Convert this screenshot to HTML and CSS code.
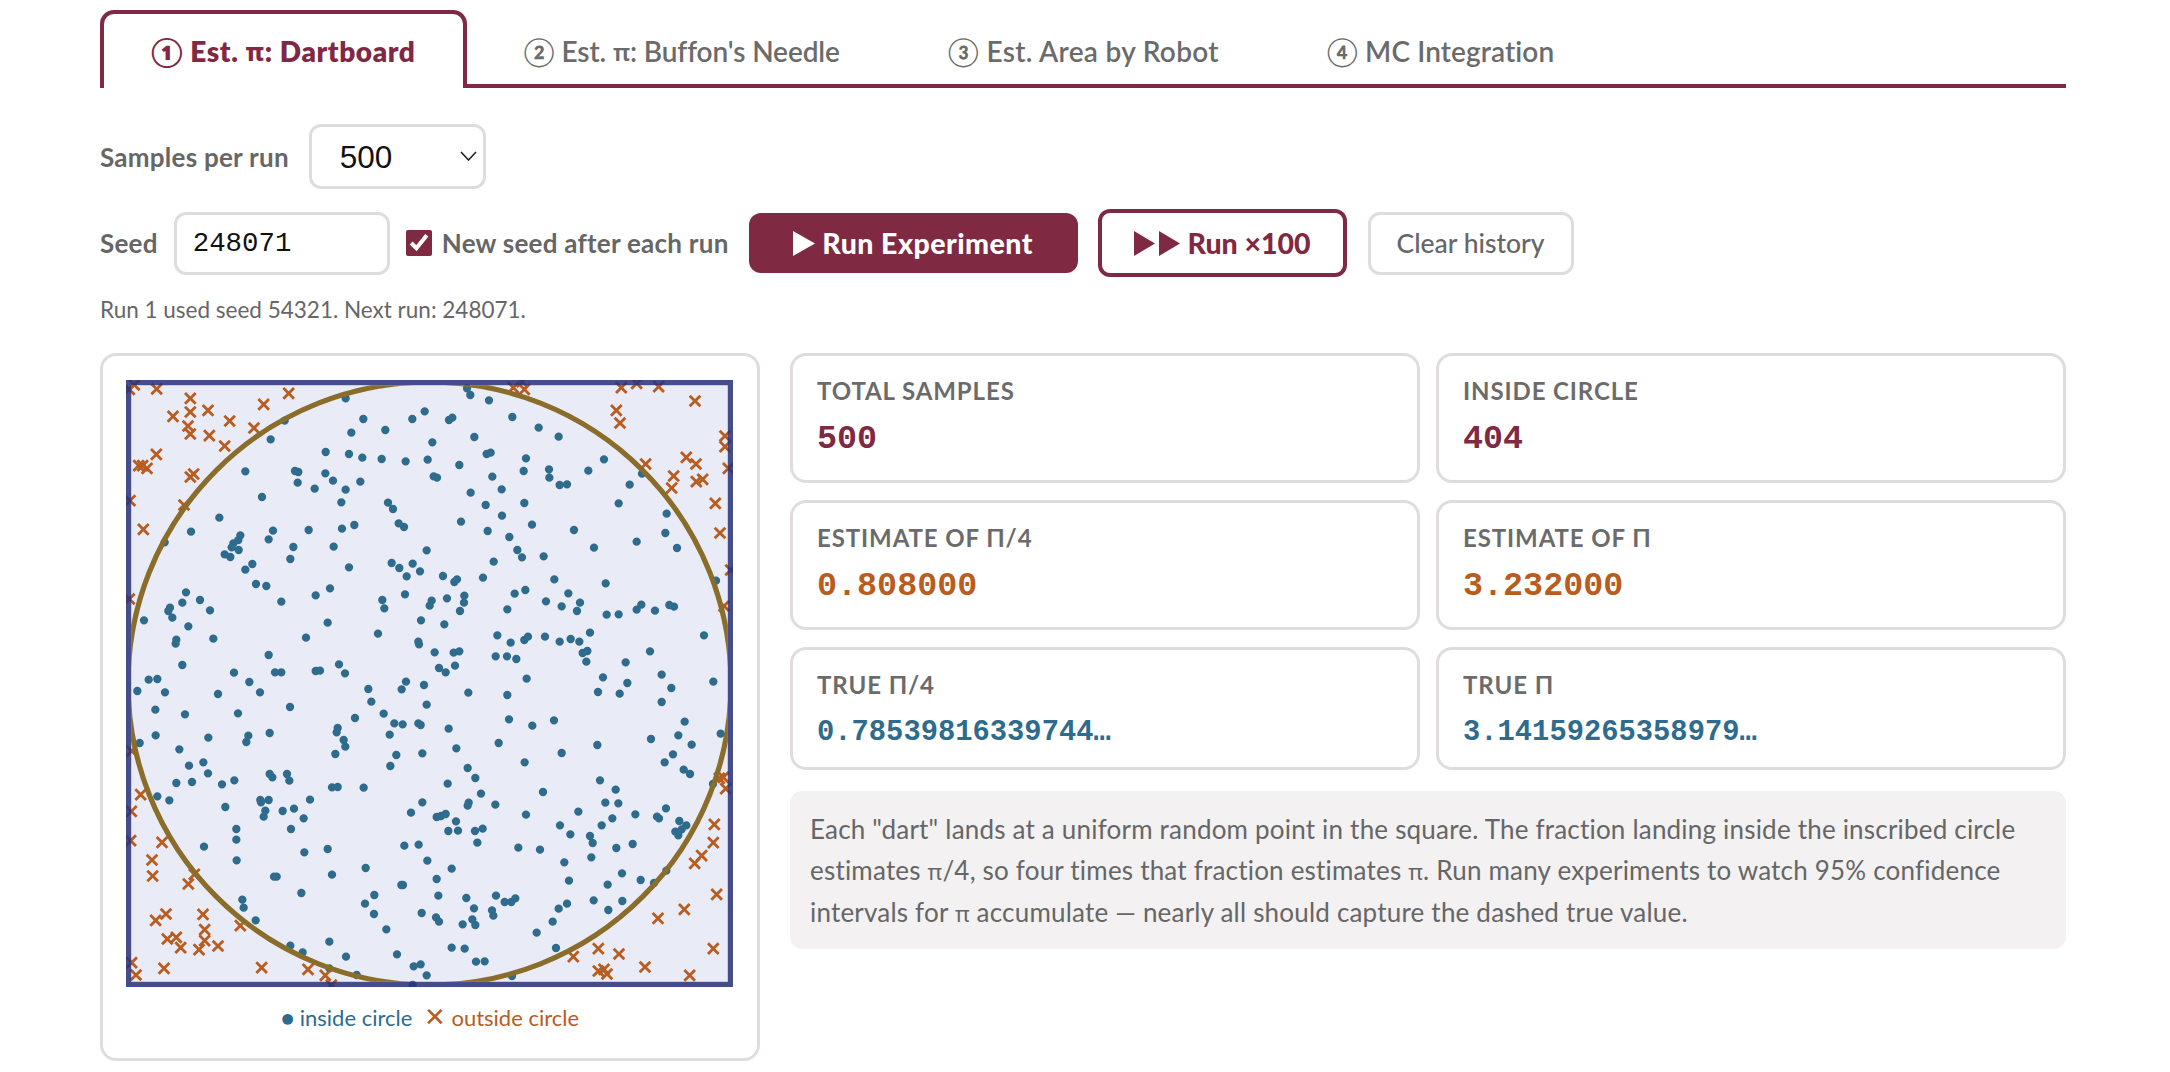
FILE: index.html
```html
<!DOCTYPE html>
<html lang="en">
<head>
<meta charset="utf-8">
<title>Monte Carlo</title>
<link rel="stylesheet" href="styles.css">
</head>
<body>
<div class="page">
  <nav class="tabs">
    <div class="tab active">① Est. <span class="pi">π</span>: Dartboard</div>
    <div class="tab">② Est. <span class="pi">π</span>: Buffon's Needle</div>
    <div class="tab">③ Est. Area by Robot</div>
    <div class="tab">④ MC Integration</div>
  </nav>
  <div class="row row-samples">
    <label class="lbl">Samples per run</label>
    <div class="select-wrap">
      <select class="select"><option>500</option></select>
      <svg class="chev" viewBox="0 0 17 10"><path d="M1 1l7.5 8L16 1" fill="none" stroke="#222" stroke-width="1.6"/></svg>
    </div>
  </div>
  <div class="row row-seed">
    <label class="lbl">Seed</label>
    <input class="seed" value="248071">
    <label class="check"><input type="checkbox" checked class="cb"><span>New seed after each run</span></label>
    <button class="btn primary"><svg class="tri" viewBox="0 0 22 25"><path d="M0 0l22 12.5L0 25z"/></svg>Run Experiment</button>
    <button class="btn outline"><svg class="tri2" viewBox="0 0 47 25"><path d="M0 0l21 12.5L0 25zM25 0l21 12.5L25 25z"/></svg>Run ×100</button>
    <button class="btn ghost">Clear history</button>
  </div>
  <p class="status">Run 1 used seed 54321. Next run: 248071.</p>
  <div class="main">
    <div class="plot-card">
      <svg class="plot" viewBox="126 380 607 607">
        <defs>
          <marker id="x" markerUnits="userSpaceOnUse" viewBox="-24 -24 48 48" markerWidth="48" markerHeight="48" refX="0" refY="0"><path d="M-16-16L16 16M16-16L-16 16" fill="none" stroke="#b85c20" stroke-width="8.5"/></marker>
          <clipPath id="inner"><rect x="131.2" y="385.2" width="596.6" height="596.6"/></clipPath>
        </defs>
        <rect x="126" y="380" width="607" height="607" class="bg"/>
        <g transform="translate(90 350) scale(.33333)">
          <path class="dots" d="M767 145h0M820 207h0M584 212h0M784 248h0M886 240h0M542 268h0M707 306h0M777 312h0M817 323h0M875 327h0M466 364h0M615 363h0M625 366h0M706 370h0M729 392h0M811 395h0M623 398h0M674 416h0M767 419h0M516 441h0M754 457h0M894 458h0M909 477h0M388 503h0M926 520h0M793 525h0M756 536h0M656 540h0M549 542h0M303 545h0M451 556h0M536 568h0M445 570h0M430 580h0M425 592h0M224 577h0M610 591h0M731 590h0M446 600h0M404 613h0M421 621h0M601 627h0M487 642h0M466 659h0M905 639h0M928 654h0M777 652h0M498 702h0M529 708h0M720 715h0M677 736h0M288 727h0M277 758h0M330 750h0M240 773h0M235 783h0M360 781h0M574 755h0M877 750h0M883 775h0M247 803h0M162 811h0M713 818h0M295 829h0M864 851h0M370 866h0M648 863h0M259 869h0M257 881h0M536 915h0M277 945h0M747 943h0M432 968h0M555 967h0M574 967h0M677 963h0M690 962h0M765 970h0M202 987h0M176 989h0M478 996h0M835 1017h0"/>
          <path class="xs" marker-start="url(#x)" marker-mid="url(#x)" marker-end="url(#x)" d="M133 105 118 118 200 117 301 145 596 130 521 163 354 181 301 186 249 199 419 213 294 228 492 234 301 252 358 257 404 288 199 313 146 347 158 347 171 355 311 372 301 381 120 452 282 465 160 538 118 747"/>
        </g>
        <g transform="translate(400 350) scale(.33333)">
          <path class="dots" d="M201 115h0M211 135h0M267 151h0M74 184h0M37 207h0M147 210h0M157 203h0M337 201h0M416 233h0M476 260h0M97 277h0M223 261h0M260 312h0M272 308h0M378 325h0M17 334h0M83 329h0M178 345h0M612 328h0M565 362h0M371 363h0M447 358h0M448 383h0M101 379h0M111 383h0M277 380h0M479 405h0M501 403h0M305 418h0M689 404h0M726 371h0M212 428h0M373 459h0M257 465h0M656 460h0M306 497h0M800 491h0M12 531h0M183 515h0M396 524h0M263 543h0M522 540h0M796 549h0M328 561h0M710 575h0M582 593h0M831 594h0M80 601h0M352 600h0M366 622h0M431 619h0M281 635h0M38 641h0M60 664h0M20 679h0M129 678h0M171 688h0M163 696h0M249 683h0M463 688h0M617 700h0M948 692h0M15 733h0M376 720h0M344 731h0M193 737h0M505 730h0M141 745h0M95 752h0M192 758h0M89 767h0M438 754h0M540 758h0M485 769h0M322 778h0M180 783h0M531 783h0M724 764h0M710 779h0M765 782h0M808 765h0M822 770h0M620 794h0M656 793h0M63 811h0M133 823h0M292 856h0M570 848h0M912 856h0M384 860h0M373 870h0M435 860h0M512 867h0M332 878h0M479 875h0M538 875h0M55 875h0M57 883h0M104 907h0M178 904h0M161 908h0M562 903h0M548 909h0M750 904h0M287 919h0M321 919h0M349 927h0M559 935h0M677 937h0M165 947h0M117 954h0M137 967h0M785 974h0M380 986h0M609 982h0M18 995h0M72 1005h0M682 999h0M940 995h0M814 1014h0M5 1018h0"/>
          <path class="xs" marker-start="url(#x)" marker-mid="url(#x)" marker-end="url(#x)" d="M340 113 373 118 366 95 664 113 710 100 776 110 885 153 649 181 660 219 975 258 975 290 859 322 888 342 737 342 985 355 821 378 889 395 908 388 815 414 946 460 960 549 992 660 972 768"/>
        </g>
        <g transform="translate(90 690) scale(.33333)">
          <path class="dots" d="M142 3h0M225 7h0M384 12h0M510 7h0M844 35h0M196 59h0M285 73h0M444 70h0M600 51h0M795 84h0M881 71h0M913 100h0M743 114h0M740 127h0M475 137h0M469 156h0M539 129h0M899 134h0M197 136h0M355 143h0M149 159h0M761 150h0M766 170h0M736 192h0M919 195h0M268 178h0M340 217h0M297 227h0M901 228h0M354 250h0M539 252h0M547 262h0M591 252h0M598 272h0M259 279h0M306 276h0M396 283h0M433 271h0M726 292h0M743 291h0M821 293h0M202 319h0M238 331h0M511 330h0M513 337h0M536 330h0M660 329h0M406 351h0M526 362h0M521 380h0M578 363h0M612 356h0M641 385h0M439 417h0M603 417h0M439 449h0M713 477h0M342 470h0M643 487h0M440 511h0M827 534h0M552 560h0M560 560h0M726 554h0M634 609h0M853 615h0M457 629h0M825 641h0M461 653h0M852 672h0M497 691h0M889 718h0M718 755h0M601 767h0M638 787h0M768 800h0M921 793h0M718 835h0M800 855h0"/>
          <path class="xs" marker-start="url(#x)" marker-mid="url(#x)" marker-end="url(#x)" d="M125 183 152 314 124 364 122 452 216 457 186 510 188 558 313 553 295 582 228 672 197 691 339 673 451 707 344 719 232 747 259 742 344 752 272 773 384 768 327 779 125 818 222 835 515 833 138 855 654 838 706 856 724 885"/>
        </g>
        <g transform="translate(400 690) scale(.33333)">
          <path class="dots" d="M205 8h0M322 15h0M594 6h0M659 11h0M785 36h0M80 44h0M327 88h0M462 91h0M854 95h0M8 103h0M55 100h0M62 105h0M397 107h0M146 116h0M962 131h0M835 136h0M753 147h0M296 159h0M592 165h0M875 164h0M169 175h0M67 190h0M485 189h0M819 193h0M374 217h0M794 217h0M203 234h0M851 239h0M870 252h0M226 264h0M143 281h0M600 271h0M939 282h0M647 299h0M429 306h0M243 311h0M616 338h0M655 340h0M67 337h0M206 338h0M203 347h0M286 344h0M33 368h0M137 372h0M123 378h0M110 381h0M378 374h0M535 365h0M706 373h0M798 355h0M771 380h0M777 385h0M168 394h0M637 385h0M838 393h0M859 406h0M145 423h0M174 422h0M225 423h0M248 416h0M480 406h0M605 406h0M511 433h0M570 438h0M578 459h0M232 458h0M845 418h0M826 425h0M835 436h0M13 467h0M56 464h0M355 473h0M420 479h0M649 474h0M698 462h0M574 502h0M82 512h0M493 517h0M155 536h0M666 550h0M799 542h0M110 567h0M507 572h0M722 570h0M762 579h0M4 585h0M9 585h0M623 584h0M115 617h0M199 624h0M288 617h0M581 631h0M667 633h0M346 625h0M334 636h0M314 636h0M501 641h0M476 656h0M625 660h0M222 655h0M276 661h0M65 669h0M280 677h0M108 682h0M117 695h0M217 688h0M188 703h0M226 705h0M458 695h0M410 728h0M155 773h0M194 776h0M468 774h0M228 815h0M254 814h0M62 823h0M41 829h0M80 856h0M336 858h0M38 885h0"/>
          <path class="xs" marker-start="url(#x)" marker-mid="url(#x)" marker-end="url(#x)" d="M970 262 958 265 977 296 943 403 940 458 905 497 884 520 950 613 853 658 774 685 595 776 657 792 520 800 940 776 735 831 595 843 612 838 621 852 869 856"/>
        </g>
        <g clip-path="url(#inner)"><circle cx="429.5" cy="683.5" r="301.5" class="ring"/></g>
        <rect x="128.6" y="382.6" width="601.8" height="601.8" class="frame"/>
      </svg>
      <div class="legend"><span class="in">● inside circle</span> <span class="out"><span class="cross">✕</span> outside circle</span></div>
    </div>
    <div class="side">
      <div class="stats">
        <div class="stat"><div class="stat-l">Total samples</div><div class="stat-v maroon">500</div></div>
        <div class="stat"><div class="stat-l">Inside circle</div><div class="stat-v maroon">404</div></div>
        <div class="stat"><div class="stat-l">Estimate of π/4</div><div class="stat-v orange">0.808000</div></div>
        <div class="stat"><div class="stat-l">Estimate of π</div><div class="stat-v orange">3.232000</div></div>
        <div class="stat"><div class="stat-l">True π/4</div><div class="stat-v small teal">0.78539816339744…</div></div>
        <div class="stat"><div class="stat-l">True π</div><div class="stat-v small teal">3.14159265358979…</div></div>
      </div>
      <div class="note">Each "dart" lands at a uniform random point in the square. The fraction landing inside the inscribed circle<br>estimates <span class="pi">π</span>/4, so four times that fraction estimates <span class="pi">π</span>. Run many experiments to watch 95% confidence<br>intervals for <span class="pi">π</span> accumulate — nearly all should capture the dashed true value.</div>
    </div>
  </div>
</div>
</body>
</html>
```

FILE: styles.css
```css
* { box-sizing: border-box; }
html, body { margin: 0; background: #fff; }
body { font-family: "Lato", "DejaVu Sans", sans-serif; color: #666; overflow: hidden; }
.page { width: 1966px; margin-left: 100px; padding-top: 10px; }
.pi { font-family: "Noto Sans", sans-serif; font-size: .86em; white-space: pre; }

.tabs { display: flex; gap: 6px; height: 78px; border-bottom: 4px solid #7f2942; }
.tab { padding: 0 47px; height: 78px; display: flex; align-items: center; gap: 0; font-size: 28px; font-weight: 600; letter-spacing: .1px; color: #6b6b6b; white-space: pre; border: 4px solid transparent; border-bottom: 0; }
.tab:nth-child(2) { letter-spacing: -.1px; }
.tab:nth-child(3) { letter-spacing: .3px; }
.tab.active { color: #7f2942; font-weight: 800; letter-spacing: .6px; border-color: #7f2942; border-radius: 14px 14px 0 0; background: #fff; }

.row { display: flex; align-items: center; }
.row-samples { margin-top: 36px; gap: 20px; }
.row-seed { margin-top: 20px; height: 68px; }
.lbl { font-size: 26px; font-weight: 700; letter-spacing: .25px; color: #666; white-space: nowrap; }

.select-wrap { position: relative; width: 177px; height: 65px; }
.select { appearance: none; width: 100%; height: 100%; border: 3px solid #e0dcde; border-radius: 12px; background: #fff; font-family: "Liberation Sans", sans-serif; font-size: 31.5px; color: #111; padding: 0 0 0 28px; }
.chev { position: absolute; right: 9px; top: 27px; width: 17px; height: 10px; }

.seed { width: 216px; height: 63px; margin-left: 16px; border: 3px solid #e0dcde; border-radius: 12px; padding: 1px 0 0 16px; font-family: "Liberation Mono", monospace; font-size: 27.4px; color: #111; }
.check { display: flex; align-items: center; margin-left: 16px; gap: 10px; font-size: 26px; font-weight: 700; letter-spacing: .25px; color: #666; white-space: nowrap; }
.cb { width: 26px; height: 26px; margin: 0; accent-color: #7f2942; }

.btn { font-family: inherit; display: flex; align-items: center; justify-content: center; gap: 7px; white-space: nowrap; cursor: pointer; }
.primary { width: 329px; height: 60px; margin-left: 20px; background: #7f2942; border: 0; border-radius: 12px; color: #fff; font-size: 28.5px; font-weight: 900; letter-spacing: .45px; }
.outline { width: 249px; height: 68px; margin-left: 20px; background: #fff; border: 4px solid #7f2942; border-radius: 12px; color: #7f2942; font-size: 28.5px; font-weight: 900; }
.ghost { width: 206px; height: 63px; margin-left: 21px; background: #fff; border: 3px solid #e0dcde; border-radius: 12px; color: #666; font-size: 26.5px; font-weight: 500; }
.tri { width: 22px; height: 25px; fill: #fff; }
.tri2 { width: 47px; height: 25px; fill: #7f2942; }

.status { margin: 18px 0 0; height: 30px; line-height: 30px; font-size: 22.5px; color: #666; }

.main { display: flex; gap: 30px; margin-top: 28px; align-items: flex-start; }
.plot-card { width: 660px; height: 708px; flex: none; border: 3px solid #e0dcde; border-radius: 16px; padding: 24px 23px; background: #fff; }
.plot { display: block; width: 607px; height: 607px; }
.bg { fill: #e9ecf6; }
.dots { fill: none; stroke: #2e6b8c; stroke-width: 25; stroke-linecap: round; }
.xs { fill: none; stroke: none; }
.ring { fill: none; stroke: #8a6d2b; stroke-width: 5.2; }
.frame { fill: none; stroke: #283177; stroke-opacity: .85; stroke-width: 5.2; }
.legend { margin-top: 17px; text-align: center; font-size: 22px; white-space: nowrap; }
.in { color: #2e6b8c; }
.out { color: #b85c20; margin-left: 6px; }
.cross { font-size: 26px; line-height: 22px; }

.side { flex: 1; min-width: 0; }
.stats { display: grid; grid-template-columns: 1fr 1fr; gap: 17px 16px; }
.stat { border: 3px solid #e0dcde; border-radius: 16px; padding: 21px 24px 0; height: 130px; background: #fff; }
.stat:nth-child(n+5) { height: 123px; }
.stat-l { font-size: 24px; line-height: 28px; font-weight: 700; text-transform: uppercase; letter-spacing: .9px; color: #6b6b6b; }
.stat-v { margin-top: 13px; font-family: "Liberation Mono", monospace; font-size: 33.4px; line-height: 42px; font-weight: 700; }
.stat-v.small { font-size: 28.8px; line-height: 36px; margin-top: 16px; }
.maroon { color: #7f2942; }
.orange { color: #b85c20; }
.teal { color: #2e6b8c; }

.note { margin-top: 21px; height: 158px; padding: 18px 20px; background: #f3f1f2; border-radius: 12px; font-size: 26px; line-height: 41px; letter-spacing: .2px; color: #666; white-space: nowrap; }
```
